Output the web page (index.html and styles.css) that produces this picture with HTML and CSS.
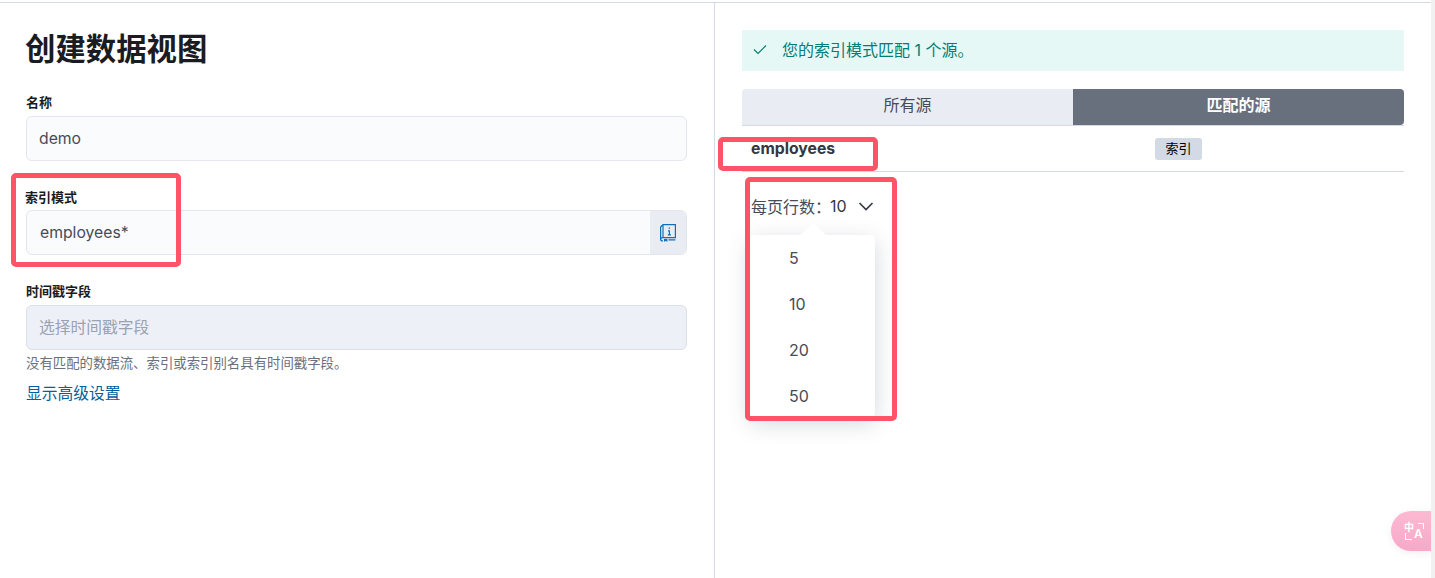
FILE: index.html
```html
<!DOCTYPE html>
<html lang="zh-CN">
  <head>
    <meta charset="UTF-8" />
    <title>创建数据视图</title>
    <link rel="stylesheet" href="styles.css">
  </head>
  <body>
    <div class="page">
      <section class="form-panel">
        <h1>创建数据视图</h1>
        <div class="field field-name">
          <label>名称</label>
          <div class="input">demo</div>
        </div>
        <div class="field field-pattern">
          <label>索引模式</label>
          <div class="input input-append">
            <span class="input-value">employees*</span>
            <span class="append">
              <svg width="16" height="18" viewBox="0 0 16 18" fill="none" stroke="#0f6fb8" stroke-width="1.200">
                <path d="M3 .6h12.400v13H3c-1.300 0-2.400.7-2.400 1.700S1.700 17 3 17" />
                <path d="M.6 15.300V3L3 .6v13" />
                <path d="M8.500 15.800h6.900" />
                <path d="M4 15h3.400v2.800l-1.700-.9-1.700.9z" fill="#0f6fb8" stroke="none" />
                <path d="M8 6.800h1.400v4M7.800 10.900h3.200" />
                <path d="M9.300 3.400v1.400" stroke-width="1.400" />
              </svg>
            </span>
          </div>
        </div>
        <div class="field field-time">
          <label>时间戳字段</label>
          <div class="input input-disabled">选择时间戳字段</div>
          <p class="help">没有匹配的数据流、索引或索引别名具有时间戳字段。</p>
        </div>
        <a class="advanced" href="#">显示高级设置</a>
      </section>

      <section class="source-panel">
        <div class="callout">
          <svg width="16" height="16" viewBox="0 0 16 16" fill="none" stroke="#017d73" stroke-width="1.100">
            <path d="M2 8.500l4 4 8-8" />
          </svg>
          <span>您的索引模式匹配 1 个源。</span>
        </div>
        <div class="tabs">
          <div class="tab">所有源</div>
          <div class="tab tab-active">匹配的源</div>
        </div>
        <div class="row">
          <span class="row-name">employees</span>
          <span class="badge">索引</span>
        </div>
        <div class="pager">
          <span>每页行数：</span><span class="pager-count">10</span>
          <svg width="16" height="16" viewBox="0 0 16 16" fill="none" stroke="#343741" stroke-width="1.600">
            <path d="M1.500 5l6.500 6.500L14.500 5" />
          </svg>
          <div class="popover">
            <div class="popover-item">5</div>
            <div class="popover-item">10</div>
            <div class="popover-item">20</div>
            <div class="popover-item">50</div>
          </div>
        </div>
      </section>

      <div class="mark mark-pattern"></div>
      <div class="mark mark-name"></div>
      <div class="mark mark-pager"></div>

      <div class="translate">
        <span class="translate-zh">中</span><span class="translate-en">A</span>
      </div>
      <div class="scroll-track"></div>
    </div>
  </body>
</html>
```

FILE: styles.css
```css
* {
  box-sizing: border-box;
}
html,
body {
  margin: 0;
  padding: 0;
  height: 578px;
  overflow: hidden;
}
body {
  font-family: Inter, "Noto Sans CJK SC", sans-serif;
  font-size: 15.750px;
  color: #464b57;
  background: #ffffff;
}
.page {
  position: relative;
  display: flex;
  height: 578px;
  margin-top: 2px;
  border-top: 1px solid #d3dae6;
}
.form-panel {
  width: 715px;
  padding: 0 27px 0 26px;
  border-right: 1px solid #d3dae6;
}
h1 {
  margin: 24px 0 0 -1px;
  height: 44px;
  font-size: 30.400px;
  line-height: 44px;
  font-weight: 700;
  color: #1a1c21;
}
.field label {
  display: block;
  height: 20px;
  font-size: 13px;
  line-height: 20px;
  font-weight: 700;
  color: #1a1c21;
}
.field-name {
  margin-top: 21px;
}
.field-pattern {
  margin-top: 26px;
}
.field-time {
  margin-top: 26px;
}
.field-pattern label {
  margin-left: -1px;
}
.input {
  height: 45px;
  margin-top: 3px;
  padding: 0 12px;
  border: 1px solid #e3e6ef;
  border-radius: 6px;
  background: #fafbfd;
  line-height: 43px;
}
.field-name .input {
  margin-top: 4px;
}
.field-time .input {
  margin-top: 4px;
}
.input-append {
  display: flex;
  justify-content: space-between;
  padding-right: 0;
  overflow: hidden;
}
.input-value {
  margin-left: 1px;
}
.append {
  display: flex;
  align-items: center;
  justify-content: center;
  width: 36px;
  background: #e9edf3;
}
.input-disabled {
  background: #eef0f7;
  border-color: #dbdfe8;
  color: #98a2b3;
}
.help {
  margin: 4px 0 0;
  font-size: 13.400px;
  line-height: 18px;
  color: #69707d;
}
.advanced {
  display: block;
  margin-top: 10px;
  line-height: 24px;
  color: #005f9e;
  text-decoration: none;
}
.source-panel {
  flex: 1;
  padding: 27px 31px 0 27px;
}
.callout {
  display: flex;
  align-items: center;
  gap: 14px;
  height: 41px;
  padding: 0 0 4px 10px;
  background: #e6f8f5;
  color: #017d73;
  font-size: 16px;
}
.tabs {
  display: flex;
  height: 37px;
  margin-top: 18px;
  border-bottom: 1px solid #d3dae6;
}
.tab {
  flex: 1;
  text-align: center;
  font-size: 16px;
  line-height: 32px;
  background: #e9edf3;
  border-radius: 4px 0 0 0;
}
.tab-active {
  font-weight: 700;
  color: #ffffff;
  background: #69707d;
  border-radius: 0 4px 4px 0;
}
.row {
  position: relative;
  height: 46px;
  padding: 1px 0 0 9px;
  border-bottom: 1px solid #d3dae6;
}
.row-name {
  display: block;
  font-weight: 700;
  font-size: 15.750px;
  line-height: 44px;
  color: #343741;
}
.badge {
  position: absolute;
  left: 413px;
  top: 12px;
  width: 47px;
  height: 22px;
  border-radius: 3px;
  background: #d3dae6;
  color: #000000;
  font-size: 13px;
  line-height: 21px;
  text-align: center;
}
.pager {
  position: relative;
  display: flex;
  align-items: center;
  margin: 22px 0 0 9px;
  height: 24px;
  font-size: 16px;
}
.pager-count {
  margin-left: -1px;
  color: #343741;
}
.pager svg {
  margin-left: 11px;
}
.popover {
  position: absolute;
  left: -1px;
  top: 41px;
  width: 125px;
  height: 182px;
  background: #ffffff;
  border-radius: 4px;
  box-shadow: 0 6px 22px rgba(60, 70, 90, 0.22);
}
.popover::before {
  content: "";
  position: absolute;
  left: 50px;
  top: -12px;
  border-left: 13px solid transparent;
  border-right: 13px solid transparent;
  border-bottom: 12px solid #ffffff;
}
.popover-item {
  height: 46px;
  padding-left: 39px;
  line-height: 46px;
}
.mark {
  position: absolute;
  border: 5px solid #ff5468;
  border-radius: 5px;
}
.mark-pattern {
  left: 11px;
  top: 170px;
  width: 170px;
  height: 94px;
}
.mark-name {
  left: 718px;
  top: 134px;
  width: 160px;
  height: 34px;
}
.mark-pager {
  left: 745px;
  top: 174px;
  width: 152px;
  height: 244px;
}
.translate {
  position: absolute;
  left: 1391px;
  top: 508px;
  width: 44px;
  height: 40px;
  border-radius: 20px 0 0 20px;
  background: linear-gradient(#fcb9d2, #f7a9c8);
  color: #ffffff;
  box-shadow: 0 2px 8px rgba(0, 0, 0, 0.06);
}
.translate::before,
.translate::after {
  content: "";
  position: absolute;
  border: 1.500px solid #ffffff;
}
.translate::before {
  left: 27px;
  top: 12px;
  width: 5px;
  height: 5px;
  border-left: none;
  border-bottom: none;
}
.translate::after {
  left: 14px;
  top: 22px;
  width: 6px;
  height: 6px;
  border-right: none;
  border-top: none;
}
.translate-zh {
  position: absolute;
  left: 13px;
  top: 10px;
  font-size: 10px;
  line-height: 12px;
  font-weight: 700;
}
.translate-en {
  position: absolute;
  left: 23px;
  top: 16px;
  font-size: 12px;
  line-height: 14px;
  font-weight: 600;
}
.scroll-track {
  position: absolute;
  right: 0;
  top: -3px;
  bottom: 0;
  width: 4px;
  background: #f1f1f1;
}
```
